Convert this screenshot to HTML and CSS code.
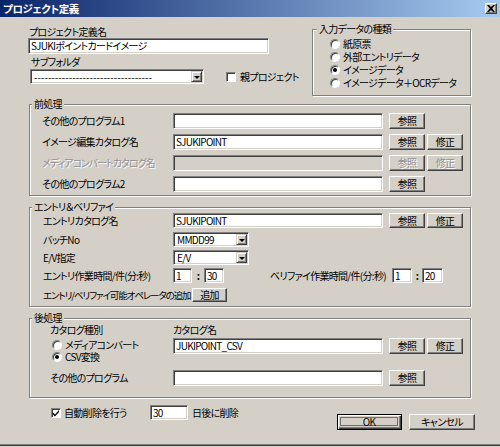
FILE: index.html
```html
<!DOCTYPE html>
<html lang="ja">
<head>
<meta charset="utf-8">
<title>プロジェクト定義</title>
<link rel="stylesheet" href="styles.css">
</head>
<body>
<div class="window">
  <div class="titlebar">
    <span class="title">プロジェクト定義</span>
    <span class="close"><svg width="8" height="7" viewBox="0 0 8 7"><path d="M0 0h2l2 2 2-2h2L5.2 3.5 8 7H6L4 5 2 7H0l2.8-3.5z"/></svg></span>
  </div>
  <div class="content">
    <div class="top">
      <div class="top-left">
        <div class="lbl lbl-name">プロジェクト定義名</div>
        <div class="field f-name">SJUKIポイントカードイメージ</div>
        <div class="lbl lbl-sub">サブフォルダ</div>
        <div class="subrow">
          <div class="combo c-sub"><span class="ctext">----------------------------------</span><span class="drop"><i></i></span></div>
          <span class="check"></span>
          <span class="check-lbl">親プロジェクト</span>
        </div>
      </div>
      <fieldset class="group g-type">
        <legend>入力データの種類</legend>
        <div class="gbody">
          <div class="opt"><span class="radio"></span>紙原票</div>
          <div class="opt"><span class="radio"></span>外部エントリデータ</div>
          <div class="opt"><span class="radio on"></span>イメージデータ</div>
          <div class="opt"><span class="radio"></span>イメージデータ＋OCRデータ</div>
        </div>
      </fieldset>
    </div>

    <fieldset class="group g-pre">
      <legend>前処理</legend>
      <div class="gbody">
        <div class="row">
          <span class="rl">その他のプログラム1</span>
          <span class="field wide"></span>
          <span class="btn b1">参照</span>
        </div>
        <div class="row">
          <span class="rl">イメージ編集カタログ名</span>
          <span class="field wide">SJUKIPOINT</span>
          <span class="btn b1">参照</span>
          <span class="btn b2">修正</span>
        </div>
        <div class="row">
          <span class="rl disabled tight">メディアコンバートカタログ名</span>
          <span class="field wide off"></span>
          <span class="btn b1 disabled">参照</span>
          <span class="btn b2 disabled">修正</span>
        </div>
        <div class="row">
          <span class="rl">その他のプログラム2</span>
          <span class="field wide"></span>
          <span class="btn b1">参照</span>
        </div>
      </div>
    </fieldset>

    <fieldset class="group g-entry">
      <legend>エントリ＆ベリファイ</legend>
      <div class="gbody">
        <div class="erow">
          <span class="el">エントリカタログ名</span>
          <span class="field wide">SJUKIPOINT</span>
          <span class="btn b1">参照</span>
          <span class="btn b2">修正</span>
        </div>
        <div class="erow m3">
          <span class="el">バッチNo</span>
          <div class="combo c-small"><span class="ctext">MMDD99</span><span class="drop"><i></i></span></div>
        </div>
        <div class="erow m2">
          <span class="el">E/V指定</span>
          <div class="combo c-small"><span class="ctext">E/V</span><span class="drop"><i></i></span></div>
        </div>
        <div class="erow m2">
          <span class="el">エントリ作業時間/件(分:秒)</span>
          <span class="field t19">1</span>
          <span class="colon c12">:</span>
          <span class="field t20">30</span>
          <span class="vlbl">ベリファイ作業時間/件(分:秒)</span>
          <span class="field t20">1</span>
          <span class="colon c10">:</span>
          <span class="field t21">20</span>
        </div>
        <div class="erow m3">
          <span class="el el-add">エントリ/ベリファイ可能オペレータの追加</span>
          <span class="btn b-add">追加</span>
        </div>
      </div>
    </fieldset>

    <fieldset class="group g-post">
      <legend>後処理</legend>
      <div class="gbody">
        <div class="prow-head">
          <span class="pl">カタログ種別</span>
          <span>カタログ名</span>
        </div>
        <div class="prow-mid">
          <div class="pl radios">
            <div class="opt2"><span class="radio"></span>メディアコンバート</div>
            <div class="opt2"><span class="radio on"></span>CSV変換</div>
          </div>
          <div class="pright">
            <span class="field wide">JUKIPOINT_CSV</span>
            <span class="btn b1">参照</span>
            <span class="btn b2">修正</span>
          </div>
        </div>
        <div class="prow-last">
          <span class="pl">その他のプログラム</span>
          <span class="field wide"></span>
          <span class="btn b1">参照</span>
        </div>
      </div>
    </fieldset>

    <div class="bottom">
      <div class="auto">
        <span class="check on"><svg width="8" height="8" viewBox="0 0 8 8"><path d="M1 3.5l2 2 4-4.5v2L3 7.5l-2-2z"/></svg></span>
        <span class="auto-lbl">自動削除を行う</span>
        <span class="field f-days">30</span>
        <span class="days-lbl">日後に削除</span>
      </div>
      <div class="actions">
        <span class="btn b-ok"><span class="focus">OK</span></span>
        <span class="btn b-cancel">キャンセル</span>
      </div>
    </div>
  </div>
</div>
</body>
</html>
```

FILE: styles.css
```css
* { box-sizing: border-box; }
html, body { margin: 0; padding: 0; }
body {
  background: #D4D0C8;
  font-family: "Noto Sans CJK JP", "Liberation Sans", sans-serif;
  font-size: 10px;
  font-feature-settings: "palt";
  letter-spacing: -0.7px;
  line-height: 12px;
  color: #000;
  white-space: nowrap;
}
.window {
  width: 500px;
  height: 447px;
  background: #D4D0C8;
  overflow: hidden;
  box-shadow: inset 0 -1px 0 #D4D0C8, inset 0 -2px 0 #404040, inset 0 -3px 0 #808080;
}
.titlebar {
  height: 17px;
  display: flex;
  align-items: center;
  justify-content: space-between;
  padding: 0 3px 0 3px;
  background: linear-gradient(to right, #0A246A, #A6CAF0);
}
.title { color: #fff; font-weight: bold; font-size: 10.5px; letter-spacing: -0.4px; }
.close {
  width: 12px; height: 11px;
  display: flex; align-items: center; justify-content: center;
  background: #D4D0C8;
  border: 1px solid; border-color: #fff #404040 #404040 #fff;
  box-shadow: inset -1px -1px 0 #808080;
}
.close svg { display: block; fill: #000; }

.content { padding-left: 29px; }

/* common controls */
.field {
  display: block;
  height: 16px;
  background: #fff;
  border: 1px solid; border-color: #808080 #fff #fff #808080;
  box-shadow: inset 1px 1px 0 #404040, inset -1px -1px 0 #D4D0C8;
  padding: 1px 0 0 2px;
  line-height: 12px;
  overflow: hidden;
  flex: none;
}
.field.off { background: #D4D0C8; }
.btn {
  display: flex; align-items: center; justify-content: center;
  height: 16px;
  background: #D4D0C8;
  border: 1px solid; border-color: #fff #404040 #404040 #fff;
  box-shadow: inset -1px -1px 0 #808080;
  flex: none;
}
.disabled { color: #909090; text-shadow: 1px 1px 0 #fff; }
.tight { letter-spacing: -1px; }
.b1 { width: 36px; margin-left: 6px; }
.b2 { width: 36px; margin-left: 2px; }
.combo {
  display: flex;
  height: 15px;
  background: #fff;
  border: 1px solid; border-color: #808080 #fff #fff #808080;
  box-shadow: inset 1px 1px 0 #404040, inset -1px -1px 0 #D4D0C8;
  padding: 1px;
  flex: none;
}
.ctext { flex: 1; padding-left: 2px; line-height: 11px; }
.c-sub .ctext { letter-spacing: 0; }
.drop {
  width: 11px;
  background: #D4D0C8;
  border: 1px solid; border-color: #D4D0C8 #404040 #404040 #D4D0C8;
  box-shadow: inset 1px 1px 0 #fff, inset -1px -1px 0 #808080;
  display: flex; align-items: center; justify-content: center;
  flex: none;
}
.drop i {
  display: block; width: 0; height: 0;
  border-left: 3px solid transparent;
  border-right: 3px solid transparent;
  border-top: 3px solid #000;
  margin-top: 1px;
}
.radio {
  width: 10px; height: 10px;
  border-radius: 50%;
  background: #fff;
  border: 1px solid; border-color: #808080 #fff #fff #808080;
  box-shadow: inset 1px 1px 0 #404040;
  display: flex; align-items: center; justify-content: center;
  flex: none;
  margin-right: 3px;
}
.radio.on::after {
  content: ""; width: 4px; height: 4px; border-radius: 50%; background: #000;
}
.check {
  width: 10px; height: 10px;
  background: #fff;
  border: 1px solid; border-color: #808080 #fff #fff #808080;
  box-shadow: inset 1px 1px 0 #404040;
  display: flex; align-items: center; justify-content: center;
  flex: none;
}
.check svg { display: block; fill: #000; }

/* group boxes */
.group {
  margin: 0; padding: 0; min-width: 0;
  border: 1px solid #808080;
  box-shadow: 1px 1px 0 #fff, inset 1px 1px 0 #fff;
}
.group legend {
  padding: 0 2px;
  margin-left: 2px;
  height: 12px;
  line-height: 12px;
  background: #D4D0C8;
}

/* top area */
.top { display: flex; height: 81px; }
.top-left { width: 283px; padding-top: 9px; }
.f-name { width: 241px; margin-left: -1px; }
.lbl-sub { margin-left: 2px; margin-top: 2px; }
.subrow { display: flex; align-items: center; margin-top: 1px; margin-left: 1px; }
.c-sub { width: 174px; }
.subrow .check { margin-left: 22px; }
.check-lbl { margin-left: 4px; }
.g-type { width: 159px; height: 73px; margin-top: 6px; }
.g-type legend { margin-left: 4px; }
.g-type .gbody { padding: 2px 0 0 17px; }
.opt { display: flex; align-items: center; height: 13px; }

/* pre */
.g-pre { width: 442px; height: 98px; }
.g-pre .gbody { padding: 3px 0 0 12px; }
.row { display: flex; align-items: center; height: 16px; }
.row + .row { margin-top: 5px; }
.rl { width: 131px; flex: none; }
.wide { width: 210px; }

/* entry */
.g-entry { width: 442px; height: 106px; margin-top: 5px; }
.g-entry .gbody { padding: 0 0 0 13px; }
.erow { display: flex; align-items: center; height: 15px; }
.erow .field, .erow .btn { height: 15px; }
.m3 { margin-top: 4px; }
.m2 { margin-top: 3px; }
.el { width: 130px; flex: none; }
.el-add { width: 149px; font-size: 9.5px; letter-spacing: -1.1px; }
.c-small { width: 76px; }
.t19 { width: 19px; }
.t20 { width: 20px; }
.t21 { width: 21px; }
.colon { text-align: center; flex: none; font-weight: bold; }
.c12 { width: 12px; }
.c10 { width: 10px; }
.vlbl { width: 122px; margin-left: 46px; flex: none; }
.erow .b-add { width: 35px; height: 14px; }

/* post */
.g-post { width: 442px; height: 86px; margin-top: 5px; }
.g-post .gbody { padding: 0 0 0 20px; }
.prow-head { display: flex; height: 12px; }
.pl { width: 123px; flex: none; }
.prow-mid { display: flex; margin-top: 2px; }
.radios { padding: 1px 0 0 2px; }
.opt2 { display: flex; align-items: center; height: 12px; }
.pright { display: flex; }
.prow-last { display: flex; align-items: center; height: 16px; margin-top: 7px; }

/* bottom */
.bottom { display: flex; width: 446px; padding-top: 7px; }
.auto { display: flex; align-items: center; height: 15px; margin-left: 22px; }
.auto-lbl { width: 86px; margin-left: 3px; }
.f-days { width: 38px; height: 15px; }
.days-lbl { margin-left: 4px; }
.actions { display: flex; margin-left: auto; margin-top: 9px; }
.b-ok {
  width: 65px; height: 16px;
  border: 1px solid #000;
  box-shadow: inset 1px 1px 0 #fff, inset -1px -1px 0 #404040, inset -2px -2px 0 #808080;
  padding: 2px 3px 3px 2px;
}
.focus {
  display: flex; align-items: center; justify-content: center;
  width: 100%; height: 100%;
  border: 1px solid #707070;
}
.b-cancel { width: 66px; margin-left: 7px; }
```
